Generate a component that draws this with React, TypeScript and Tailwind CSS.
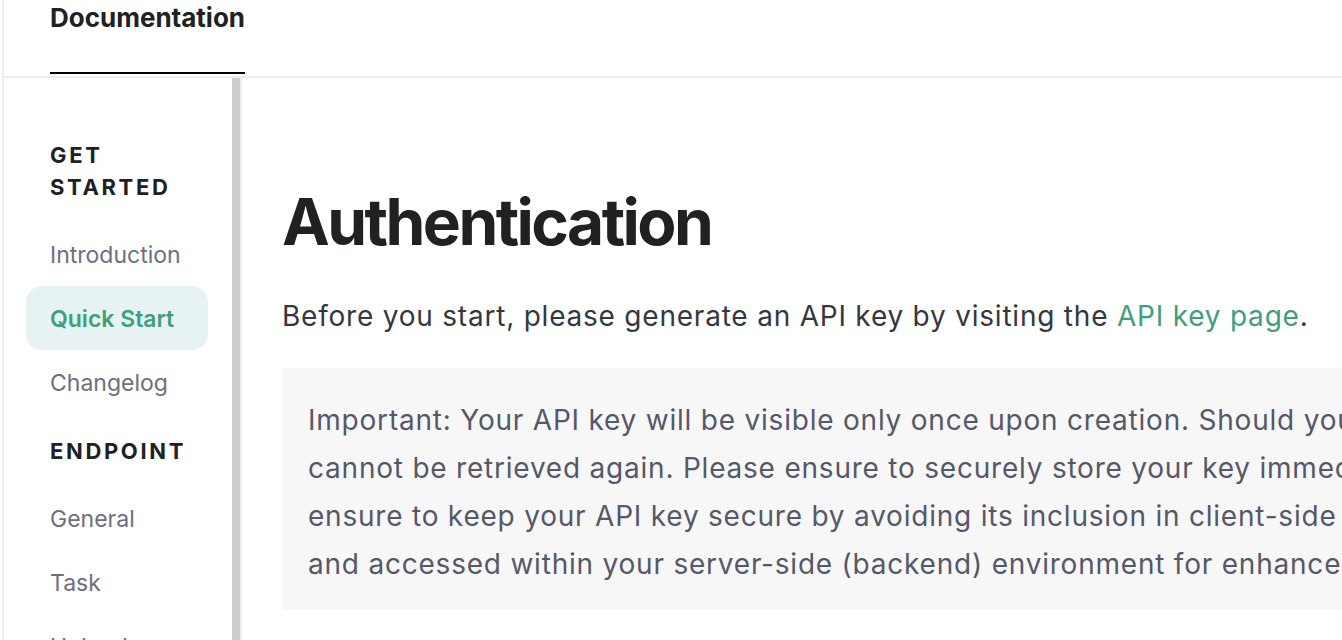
import React from "react";

const font = { fontFamily: "Inter, 'Noto Sans', sans-serif" };

type NavItem = { label: string; active?: boolean };

const sections: { title: string[]; items: NavItem[] }[] = [
  {
    title: ["GET", "STARTED"],
    items: [{ label: "Introduction" }, { label: "Quick Start", active: true }, { label: "Changelog" }],
  },
  {
    title: ["ENDPOINT"],
    items: [{ label: "General" }, { label: "Task" }, { label: "Upload" }],
  },
];

const calloutLines = [
  "Important: Your API key will be visible only once upon creation. Should you lose it, it",
  "cannot be retrieved again. Please ensure to securely store your key immediately. Also, please",
  "ensure to keep your API key secure by avoiding its inclusion in client-side code. It should be stored",
  "and accessed within your server-side (backend) environment for enhanced security.",
];

function Sidebar() {
  return (
    <aside className="flex h-full shrink-0">
      <nav className="w-[228px] pl-[22px] pr-[24px] pt-[61px]">
        {sections.map((section, i) => (
          <div key={i} className={i > 0 ? "mt-[21px]" : ""}>
            <div className="mb-[19px] pl-6 text-[22px] font-bold uppercase leading-[32px] tracking-[0.12em] text-[#202123]">
              {section.title.map((t) => (
                <div key={t}>{t}</div>
              ))}
            </div>
            {section.items.map((item) => (
              <div
                key={item.label}
                className={
                  item.active
                    ? "flex h-16 items-center rounded-2xl bg-[#e6f3f2] px-6 pt-[2px] text-[23px] font-semibold text-[#3e9e7d]"
                    : "flex h-16 items-center px-6 pt-[2px] text-[23px] text-[#6e6e80]"
                }
              >
                {item.label}
              </div>
            ))}
          </div>
        ))}
      </nav>
      <div className="h-full w-2 bg-[#cdcdcd]" />
      <div className="h-full w-[2px] bg-[#ececf1]" />
    </aside>
  );
}

export default function App() {
  return (
    <div className="h-[640px] w-full overflow-hidden bg-white" style={font}>
      <div className="ml-[2px] flex h-full flex-col border-l-2 border-[#ececf1]">
        <header className="flex h-[78px] shrink-0 border-b-2 border-[#ececf1] pl-[46px]">
          <div className="flex h-[74px] items-start border-b-2 border-black pt-[2px] text-[26px] font-bold leading-[32px] text-[#202123]">
            Documentation
          </div>
        </header>
        <div className="flex min-h-0 flex-1">
          <Sidebar />
          <main className="min-w-0 flex-1 overflow-hidden pl-10 pt-[105px]">
            <div className="w-[1400px]">
              <h1 className="text-[64px] font-bold leading-[77px] tracking-[-0.04em] text-[#202123]">
                Authentication
              </h1>
              <p className="mt-8 text-[28px] leading-[48px] tracking-[0.028em] text-[#353740]">
                Before you start, please generate an API key by visiting the{" "}
                <a className="text-[#3e9e7d]">API key page</a>.
              </p>
              <div className="mt-7 bg-[#f7f7f8] pb-[22px] pl-[26px] pt-[28px] text-[28px] leading-[48px] tracking-[0.028em] text-[#565869]">
                {calloutLines.map((line) => (
                  <div key={line} className="whitespace-nowrap">
                    {line}
                  </div>
                ))}
              </div>
            </div>
          </main>
        </div>
      </div>
    </div>
  );
}
